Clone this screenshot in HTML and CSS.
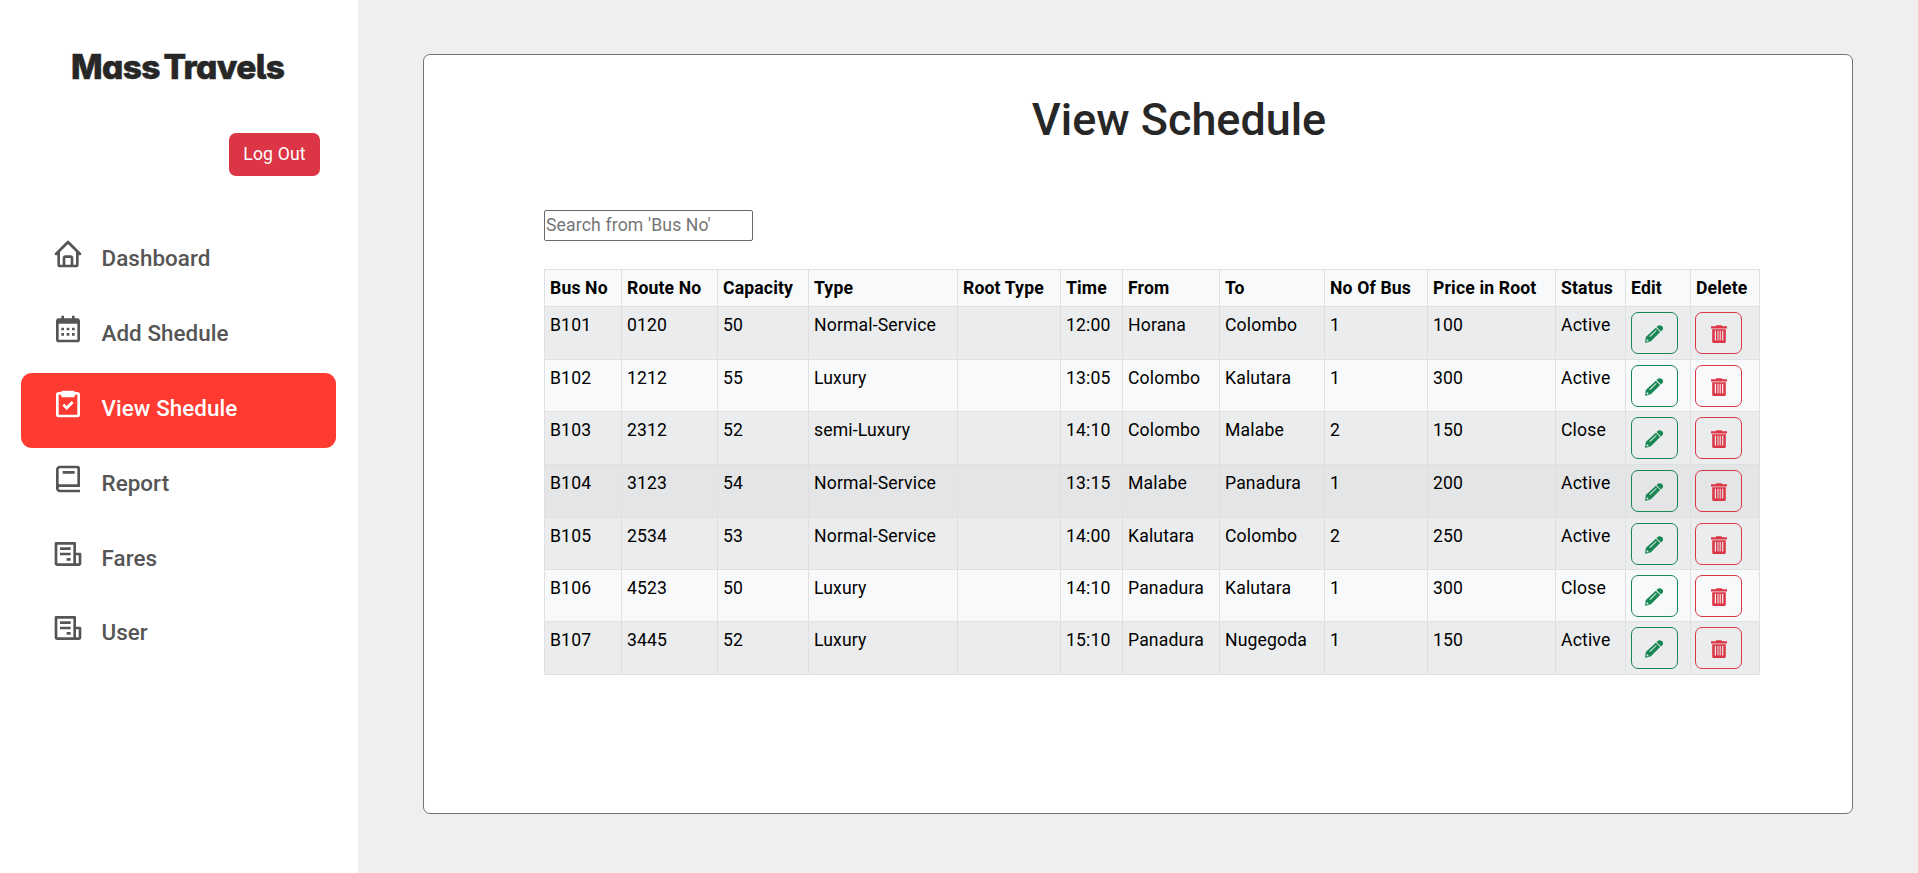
FILE: index.html
```html
<!DOCTYPE html>
<html lang="en">
<head>
<meta charset="utf-8">
<title>Mass Travels</title>
<link rel="stylesheet" href="styles.css">
</head>
<body>
<svg class="defs" aria-hidden="true">
  <symbol id="home" viewBox="0 0 24 24"><path d="M3 13h1v7c0 1.103.897 2 2 2h12c1.103 0 2-.897 2-2v-7h1a1 1 0 0 0 .707-1.707l-9-9a.999.999 0 0 0-1.414 0l-9 9A1 1 0 0 0 3 13zm7 7v-5h4v5h-4zm2-15.586 6 6V15l.001 5H16v-5c0-1.103-.897-2-2-2h-4c-1.103 0-2 .897-2 2v5H6v-9.586l6-6z"/></symbol>
  <symbol id="calendar" viewBox="0 0 24 24"><path d="M7 11h2v2H7zm0 4h2v2H7zm4-4h2v2h-2zm0 4h2v2h-2zm4-4h2v2h-2zm0 4h2v2h-2z"/><path d="M5 22h14c1.103 0 2-.897 2-2V6c0-1.103-.897-2-2-2h-2V2h-2v2H9V2H7v2H5c-1.103 0-2 .897-2 2v14c0 1.103.897 2 2 2zM19 8l.001 12H5V8h14z"/></symbol>
  <symbol id="task" viewBox="0 0 24 24"><path d="M5 22h14c1.103 0 2-.897 2-2V5a2 2 0 0 0-2-2h-2a1 1 0 0 0-1-1H8a1 1 0 0 0-1 1H5a2 2 0 0 0-2 2v15c0 1.103.897 2 2 2zM5 5h2v2h10V5h2v15H5V5z"/><path d="m11 13.586-1.793-1.793-1.414 1.414L11 16.414l5.207-5.207-1.414-1.414z"/></symbol>
  <symbol id="book" viewBox="0 0 24 24"><path d="M6.012 18H21V4a2 2 0 0 0-2-2H6c-1.206 0-3 .799-3 3v14c0 2.201 1.794 3 3 3h15v-2H6.012C5.55 19.988 5 19.805 5 19s.55-.988 1.012-1zM8 6h9v2H8V6zM5 4.800Q5 4 6 4h13v12H5z" fill-rule="evenodd"/></symbol>
  <symbol id="news" viewBox="0 0 24 24"><path fill-rule="evenodd" d="M2 4a1 1 0 0 1 1-1h14a1 1 0 0 1 1 1v7h3a1 1 0 0 1 1 1v7a2 2 0 0 1-2 2H4a2 2 0 0 1-2-2zM4 5v14h12V5zM18 13v6h2v-6zM6 7h8v2H6zM6 11h8v2H6zM11 15h3v2h-3z"/></symbol>
  <symbol id="pencil" viewBox="0 0 18 18"><path fill-rule="evenodd" d="M12.300 1.300Q14.700-.9 17.100 1.300T16.700 5.700L15.900 6.400 11.500 2.100zM10.800 2.700 15.200 7 5.900 16.200.1 17.900.8 12zM11 4.900 4.500 11.200 5.200 11.900 11.700 5.600zM1.900 14 1.500 16.500 3.900 15.900z"/></symbol>
  <symbol id="trash" viewBox="0 0 16 18"><path fill-rule="evenodd" d="M0 1.300h4.500Q5 .2 6 .2h4q1 0 1.500 1.100H16v2.200H0zM1.200 4.200h13.600v12.300q0 1.500-1.500 1.500H2.700q-1.500 0-1.500-1.500zM3.800 5.800v9.800h1.200v-9.800zM6.500 5.800v9.800h1v-9.800zM8.700 5.800v9.800h1v-9.800zM11.100 5.800v9.800h1.200v-9.800z"/></symbol>
</svg>
<div class="page">
  <aside class="sidebar">
    <div class="brand">Mass Travels</div>
    <button class="logout">Log Out</button>
    <nav class="menu">
      <a class="item"><svg><use href="#home"/></svg><span>Dashboard</span></a>
      <a class="item"><svg><use href="#calendar"/></svg><span>Add Shedule</span></a>
      <a class="item active"><svg><use href="#task"/></svg><span>View Shedule</span></a>
      <a class="item"><svg><use href="#book"/></svg><span>Report</span></a>
      <a class="item"><svg><use href="#news"/></svg><span>Fares</span></a>
      <a class="item"><svg><use href="#news"/></svg><span>User</span></a>
    </nav>
  </aside>
  <main class="content">
    <section class="card">
      <h1>View Schedule</h1>
      <input class="search" type="text" placeholder="Search from 'Bus No'">
      <table>
        <colgroup><col class="c1"><col class="c2"><col class="c3"><col class="c4"><col class="c5"><col class="c6"><col class="c7"><col class="c8"><col class="c9"><col class="c10"><col class="c11"><col class="c12"><col class="c13"></colgroup>
        <thead><tr><th>Bus No</th><th>Route No</th><th>Capacity</th><th>Type</th><th>Root Type</th><th>Time</th><th>From</th><th>To</th><th>No Of Bus</th><th>Price in Root</th><th>Status</th><th>Edit</th><th>Delete</th></tr></thead>
        <tbody id="rows"></tbody>
      </table>
    </section>
  </main>
</div>
<script src="script.js"></script>
</body>
</html>
```
FILE: styles.css
```css
* { box-sizing: border-box; }
body { margin: 0; font-family: Roboto, "Liberation Sans", sans-serif; font-size: 17.6px; color: #000; background: #efefef; }
.defs { display: none; }
.page { display: flex; height: 873px; overflow: hidden; }
.sidebar { width: 358px; flex: none; background: #fff; display: flex; flex-direction: column; padding: 42px 22.500px 0 20.500px; }
.brand { height: 50px; line-height: 50px; margin-left: 50.500px; white-space: nowrap; font-family: Inter, sans-serif; font-weight: 800; font-size: 33.500px; letter-spacing: -.65px; word-spacing: -3px; font-feature-settings: "cv11", "cv05"; color: #272727; -webkit-text-stroke: .6px #272727; }
.logout { align-self: flex-end; margin: 41px 15.500px 0 0; width: 91px; height: 43px; border: 0; border-radius: 7px; background: #dc3545; color: #fff; font: 400 17.6px Roboto, sans-serif; letter-spacing: .15px; padding: 0 0 1px; }
.menu { margin-top: 47px; }
.item { display: flex; height: 74.900px; border-radius: 11px; padding-left: 31px; color: #555; font-weight: 500; font-size: 22.4px; }
.item svg { width: 32px; height: 32px; margin-top: 15px; fill: currentColor; }
.item span { margin: 22px 0 0 18px; line-height: 26px; letter-spacing: .06px; }
.active { background: #ff3a30; color: #fff; }
.content { flex: 1; padding: 54px 0 0 65px; }
.card { width: 1430px; height: 760px; background: #fff; border: 1px solid #6c757d; border-radius: 7px; padding: 38px 0 0 120px; }
h1 { margin: 0; width: 1270px; text-align: center; font-weight: 500; font-size: 44.900px; line-height: 53px; color: #272727; }
.search { display: block; margin-top: 64px; width: 209px; height: 31px; padding: 0 1px 1px; border: 1px solid #6b6b6b; border-radius: 2px; font: 400 17.6px Roboto, sans-serif; letter-spacing: .15px; outline: 0; }
.search::placeholder { color: #757575; }
table { margin-top: 28px; width: 1216px; table-layout: fixed; border-collapse: collapse; background: #f8f9fa; letter-spacing: .15px; }
th, td { border: 1px solid #dfe0e1; padding: 4px 4.500px 4px 5px; text-align: left; vertical-align: top; line-height: 28px; height: 53px; white-space: nowrap; }
th { height: 37px; font-weight: 700; }
tbody tr:nth-child(odd) { background: #ebeced; }
tbody tr:nth-child(4) { background: #e4e5e6; }
tr:nth-child(2) td, tr:nth-child(5) td, tr:nth-child(6) td { height: 52px; }
td.action { padding: 5px 4px 0 4.500px; line-height: 0; }
td.action:last-child { padding-left: 4px; }
.btn { width: 47px; height: 42px; border: 1px solid; border-radius: 7px; background: none; padding: 2px 0 0; display: flex; justify-content: center; align-items: center; }
.btn svg { width: 18px; height: 18px; fill: currentColor; }
.edit { color: #198754; }
.delete { color: #dc3545; }
.c1 { width: 77px; }
.c2 { width: 96px; }
.c3 { width: 91px; }
.c4 { width: 149px; }
.c5 { width: 103px; }
.c6 { width: 62px; }
.c7 { width: 97px; }
.c8 { width: 105px; }
.c9 { width: 103px; }
.c10 { width: 128px; }
.c11 { width: 70px; }
.c12 { width: 65px; }
.c13 { width: 69px; }
```
FILE: script.js
```js
const schedules = [
  ["B101", "0120", "50", "Normal-Service", "", "12:00", "Horana", "Colombo", "1", "100", "Active"],
  ["B102", "1212", "55", "Luxury", "", "13:05", "Colombo", "Kalutara", "1", "300", "Active"],
  ["B103", "2312", "52", "semi-Luxury", "", "14:10", "Colombo", "Malabe", "2", "150", "Close"],
  ["B104", "3123", "54", "Normal-Service", "", "13:15", "Malabe", "Panadura", "1", "200", "Active"],
  ["B105", "2534", "53", "Normal-Service", "", "14:00", "Kalutara", "Colombo", "2", "250", "Active"],
  ["B106", "4523", "50", "Luxury", "", "14:10", "Panadura", "Kalutara", "1", "300", "Close"],
  ["B107", "3445", "52", "Luxury", "", "15:10", "Panadura", "Nugegoda", "1", "150", "Active"]
];
const action = (kind, icon) =>
  `<td class="action"><button class="btn ${kind}" aria-label="${kind}"><svg><use href="#${icon}"/></svg></button></td>`;
document.getElementById("rows").innerHTML = schedules.map(row =>
  `<tr>${row.map(value => `<td>${value}</td>`).join("")}${action("edit", "pencil")}${action("delete", "trash")}</tr>`
).join("");
```
